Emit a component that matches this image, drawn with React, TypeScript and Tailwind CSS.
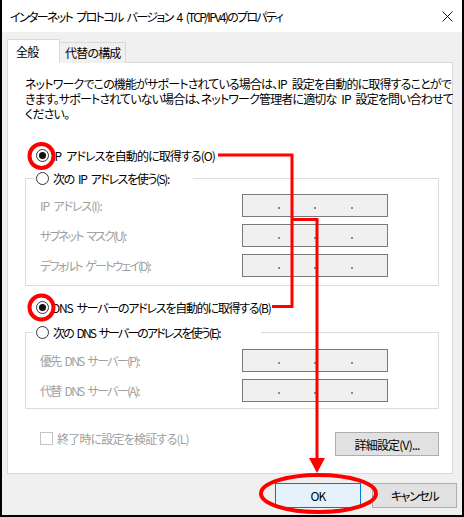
import React from "react";

const font = "font-['Noto_Sans_CJK_JP','Noto_Sans',sans-serif] [font-feature-settings:'palt']";

function Radio({ checked }: { checked?: boolean }) {
  return (
    <span className="w-[13px] h-[13px] rounded-full border border-[#333333] bg-white flex items-center justify-center shrink-0">
      {checked && <span className="w-[7px] h-[7px] rounded-full bg-[#111111]" />}
    </span>
  );
}

function IpBox() {
  return (
    <div className="w-[146px] h-[23px] border border-[#7a7a7a] bg-[#f0f0f0] flex items-center">
      <div className="flex-1" />
      <span className="w-[2px] h-[2px] bg-[#8a8a8a] mt-[4px]" />
      <div className="flex-1" />
      <span className="w-[2px] h-[2px] bg-[#8a8a8a] mt-[4px]" />
      <div className="flex-1" />
      <span className="w-[2px] h-[2px] bg-[#8a8a8a] mt-[4px]" />
      <div className="flex-1" />
    </div>
  );
}

function FieldRow({ label, cls }: { label: string; cls: string }) {
  return (
    <div className="flex items-center h-[23px]">
      <div className="w-[216px] pl-[14px] text-[#a0a0a0]">
        <span className={`whitespace-nowrap ${cls}`}>{label}</span>
      </div>
      <IpBox />
    </div>
  );
}

export default function App() {
  return (
    <div className={`w-[464px] h-[517px] relative bg-[#f0f0f0] border-2 border-t-0 border-black text-[12px] leading-[15px] tracking-[-0.8px] [word-spacing:3px] text-black overflow-hidden ${font}`}>
      {/* title bar */}
      <div className="h-[32px] bg-white flex items-center justify-between pl-[8px] pr-[9px]">
        <span className="whitespace-nowrap tracking-[-1.65px]">インターネット プロトコル バージョン 4 (TCP/IPv4)のプロパティ</span>
        <svg width="11" height="11" viewBox="0 0 11 11">
          <path d="M0.5 0.5 L10.5 10.5 M10.5 0.5 L0.5 10.5" stroke="#111" strokeWidth="1" fill="none" />
        </svg>
      </div>

      {/* body */}
      <div className="px-[5px] pt-[7px]">
        {/* tabs */}
        <div className="flex items-end h-[24px] -mb-px">
          <div className="relative z-10 w-[53px] h-[24px] bg-white border border-b-0 border-[#d9d9d9] pl-[8px] pt-[4px]">全般</div>
          <div className="w-[66px] h-[21px] bg-[#f0f0f0] border border-l-0 border-b-0 border-[#d9d9d9] pl-[5px] pt-[2px] whitespace-nowrap">代替の構成</div>
        </div>

        {/* panel */}
        <div className="w-[446px] h-[412px] bg-white border border-[#d9d9d9] pl-[17px] pr-[13px] pt-[13px] flex flex-col">
          <div className="whitespace-nowrap tracking-[-0.85px]">
            ネットワークでこの機能がサポートされている場合は、IP 設定を自動的に取得することがで<br />
            きます。サポートされていない場合は、ネットワーク管理者に適切な IP 設定を問い合わせて<br />
            ください。
          </div>

          <div className="mt-[26px] h-[16px] flex items-center gap-[3px] pl-[11px]">
            <Radio checked />
            <span className="whitespace-nowrap tracking-[-0.9px]">IP アドレスを自動的に取得する(O)</span>
          </div>

          {/* group 1 */}
          <div className="relative mt-[15px] h-[108px] border border-[#dcdcdc] pt-[15px] pb-[8px] flex flex-col gap-[7px]">
            <div className="absolute left-[8px] top-[-9px] h-[16px] w-[159px] bg-white flex items-center gap-[4px] pl-[2px]">
              <Radio />
              <span className="whitespace-nowrap tracking-[-1.4px]">次の IP アドレスを使う(S):</span>
            </div>
            <FieldRow label="IP アドレス(I):" cls="tracking-[-1.1px]" />
            <FieldRow label="サブネット マスク(U):" cls="tracking-[-1.9px]" />
            <FieldRow label="デフォルト ゲートウェイ(D):" cls="tracking-[-1.9px]" />
          </div>

          <div className="mt-[13px] h-[16px] flex items-center gap-[3px] pl-[11px]">
            <Radio checked />
            <span className="whitespace-nowrap tracking-[-1.25px]">DNS サーバーのアドレスを自動的に取得する(B)</span>
          </div>

          {/* group 2 */}
          <div className="relative mt-[17px] h-[77px] border border-[#dcdcdc] pt-[16px] flex flex-col gap-[7px]">
            <div className="absolute left-[8px] top-[-9px] h-[16px] w-[227px] bg-white flex items-center gap-[4px] pl-[2px]">
              <Radio />
              <span className="whitespace-nowrap tracking-[-1.9px]">次の DNS サーバーのアドレスを使う(E):</span>
            </div>
            <FieldRow label="優先 DNS サーバー(P):" cls="tracking-[-1.7px]" />
            <FieldRow label="代替 DNS サーバー(A):" cls="tracking-[-1.7px]" />
          </div>

          <div className="mt-[23px] flex items-start justify-between">
            <div className="flex items-center gap-[4px] pl-[15px] h-[13px] mt-[0px]">
              <span className="w-[13px] h-[13px] border border-[#c4c4c4] bg-white shrink-0" />
              <span className="text-[#a0a0a0] whitespace-nowrap">終了時に設定を検証する(L)</span>
            </div>
            <button className="w-[104px] h-[24px] bg-[#e1e1e1] border border-[#adadad] flex items-center justify-center whitespace-nowrap">
              詳細設定(V)...
            </button>
          </div>
        </div>

        {/* buttons */}
        <div className="mt-[9px] flex justify-end gap-[11px]">
          <button className="w-[86px] h-[25px] bg-[#e5f1fb] border border-[#0078d7] flex items-center justify-center">OK</button>
          <button className="w-[85px] h-[25px] bg-[#e1e1e1] border border-[#adadad] flex items-center justify-center tracking-[-1.4px]">キャンセル</button>
        </div>
      </div>

      {/* red annotations */}
      <svg className="absolute left-[-2px] top-0 pointer-events-none" width="464" height="517" viewBox="0 0 464 517">
        <g stroke="#ff0000" fill="none" strokeWidth="3">
          <circle cx="41.5" cy="156" r="12" strokeWidth="4" />
          <circle cx="41.5" cy="307.5" r="12" strokeWidth="4" />
          <polyline points="218,155 292,155 292,306.5 272,306.5" />
          <polyline points="292,219.5 317,219.5 317,460" />
          <ellipse cx="318.5" cy="493.5" rx="57.5" ry="18.5" strokeWidth="4" />
        </g>
        <polygon points="309,458 325,458 317,473" fill="#ff0000" />
      </svg>
    </div>
  );
}
